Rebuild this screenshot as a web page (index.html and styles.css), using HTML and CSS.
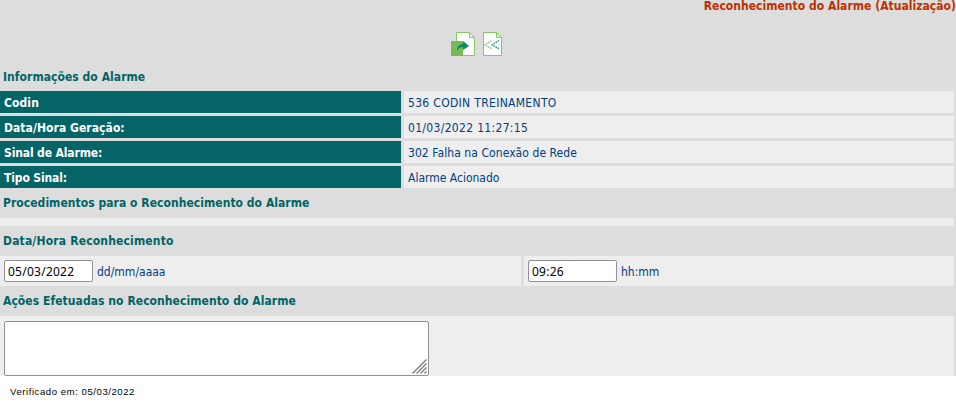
FILE: index.html
```html
<!DOCTYPE html>
<html lang="pt-BR">
<head>
<meta charset="utf-8">
<title>Reconhecimento do Alarme</title>
<link rel="stylesheet" href="styles.css">
</head>
<body>
<main class="panel">
  <h1 class="title"><span>Reconhecimento do Alarme (Atualização)</span></h1>
  <div class="toolbar">
    <svg class="icon-save" width="24" height="24" viewBox="0 0 24 24">
      <path d="M5.500.5h13l5 5v18h-18z" fill="#fff" stroke="#86c765"/>
      <path d="M18.500.5v5h5z" fill="#e5f2dc" stroke="#86c765"/>
      <path d="M0 9h12v15H0z" fill="#78b956"/>
      <path d="M6 19c0-5 3-7 6-7V9l6 5-6 4v-3c-3 0-4 1-6 4z" fill="#078a68"/>
    </svg>
    <svg class="icon-back" width="19" height="24" viewBox="0 0 19 24">
      <path d="M.5.5h13l5 5v18H.5z" fill="#fff" stroke="#86c765"/>
      <path d="M13.500.5v5h5z" fill="#e5f2dc" stroke="#86c765"/>
      <path d="M7 8.300h1.500v1.500H7zM5 9.500h1.500V11H5zM3 10.700h1.500v1.500H3zM1.300 12h1.500v1.500H1.300zM3 13.300h1.500v1.500H3zM5 14.400h1.500v1.500H5zM7 15.600h1.500v1.500H7z" fill="#9bd07a"/>
      <path d="M14.500 8.300H16v1.500h-1.500zM12.500 9.500H14V11h-1.500zM10.500 10.700H12v1.500h-1.500zM8.500 12H10v1.500H8.500zM10.500 13.300H12v1.500h-1.500zM12.500 14.400H14v1.500h-1.500zM14.500 15.600H16v1.500h-1.500z" fill="#279b7a"/>
    </svg>
  </div>
  <h2 class="section first"><span class="t-info">Informações do Alarme</span></h2>
  <dl class="details">
    <dt><span class="t-codin">Codin</span></dt><dd><span class="v-codin">536 CODIN TREINAMENTO</span></dd>
    <dt><span class="t-data">Data/Hora Geração:</span></dt><dd><span class="v-data">01/03/2022 11:27:15</span></dd>
    <dt><span class="t-sinal">Sinal de Alarme:</span></dt><dd><span class="v-sinal">302 Falha na Conexão de Rede</span></dd>
    <dt><span class="t-tipo">Tipo Sinal:</span></dt><dd><span class="v-tipo">Alarme Acionado</span></dd>
  </dl>
  <h2 class="section"><span class="t-proc">Procedimentos para o Reconhecimento do Alarme</span></h2>
  <div class="strip"></div>
  <h2 class="section"><span class="t-rec">Data/Hora Reconhecimento</span></h2>
  <div class="when">
    <label class="field"><input type="text" value="05/03/2022"><span class="h-date">dd/mm/aaaa</span></label>
    <label class="field"><input type="text" value="09:26"><span class="h-time">hh:mm</span></label>
  </div>
  <h2 class="section"><span class="t-acoes">Ações Efetuadas no Reconhecimento do Alarme</span></h2>
  <div class="actions">
    <div class="area">
      <textarea></textarea>
      <svg class="grip" width="15" height="15" viewBox="0 0 15 15"><path d="M.5 14.500l14-14M4.500 14.500l10-10M8.500 14.500l6-6M12.500 14.500l2-2" stroke="#77777d" stroke-width="1.300" fill="none"/></svg>
    </div>
  </div>
</main>
<footer class="footer">Verificado em: 05/03/2022</footer>
</body>
</html>
```
FILE: styles.css
```css
* { box-sizing: border-box; }
body { margin: 0; background: #fff; color: #004080; font: 12px/14px "DejaVu Sans Condensed", "DejaVu Sans", sans-serif; font-stretch: condensed; overflow: hidden; }
span { white-space: nowrap; }
.panel { height: 376px; background: #ddd; }
.title { margin: 0; height: 31px; line-height: 12px; font-size: 12px; text-align: right; color: #bf3000; letter-spacing: .03px; }
.toolbar { display: flex; justify-content: center; gap: 8px; height: 31px; padding: 1px 3px 0 0; }
.section { margin: 0; height: 30px; padding-left: 3px; font-size: 12px; line-height: 31px; color: #006465; }
.section.first { height: 29px; }
.details { display: grid; grid-template-columns: 401px 550px; grid-auto-rows: 22px; gap: 3px; margin: 0; }
dt, dd { margin: 0; padding-left: 4px; line-height: 24px; }
dt { background: #046466; color: #fff; font-weight: bold; }
dd { background: #eee; }
.t-info { letter-spacing: .05px; }
.t-codin { letter-spacing: .1px; }
.t-data { letter-spacing: .06px; }
.t-sinal, .t-tipo { letter-spacing: -.13px; }
.t-proc { letter-spacing: .045px; }
.t-rec { letter-spacing: .17px; }
.t-acoes { letter-spacing: .06px; }
.v-codin, .v-data { letter-spacing: .32px; }
.v-sinal { letter-spacing: .07px; }
.strip { height: 8px; margin-right: 2px; background: #eee; }
.when { display: grid; grid-template-columns: 521px 430px; gap: 3px; height: 30px; }
.field { display: flex; align-items: center; gap: 4px; padding-left: 4px; background: #eee; }
.field span { padding-top: 2px; }
input { width: 89px; height: 22px; margin: 0; padding: 0 3px; border: 1px solid #8f8f9d; border-radius: 2px; background: #fff; color: #000; font: 12px "Noto Sans", sans-serif; letter-spacing: .25px; }
.actions { height: 60px; margin-right: 2px; padding: 5px 4px 0; background: #eee; }
.area { position: relative; width: 425px; height: 55px; }
textarea { display: block; width: 425px; height: 55px; margin: 0; border: 1px solid #8f8f9d; border-radius: 2px; resize: none; background: #fff; }
.grip { position: absolute; right: 2px; bottom: 2px; }
.footer { padding: 9px 10px; color: #000; font: 9.6px/14px "Liberation Sans", sans-serif; letter-spacing: .54px; }
```
